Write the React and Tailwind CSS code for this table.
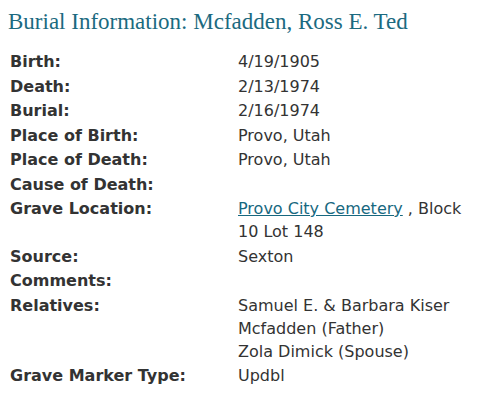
import React from 'react';

const rows = [
  { label: 'Birth:', value: '4/19/1905' },
  { label: 'Death:', value: '2/13/1974' },
  { label: 'Burial:', value: '2/16/1974' },
  { label: 'Place of Birth:', value: 'Provo, Utah' },
  { label: 'Place of Death:', value: 'Provo, Utah' },
  { label: 'Cause of Death:', value: '' },
  {
    label: 'Grave Location:',
    value: (
      <>
        <a href="#" className="text-[#17687f] underline">Provo City Cemetery</a> , Block 10 Lot 148
      </>
    ),
  },
  { label: 'Source:', value: 'Sexton' },
  { label: 'Comments:', value: '' },
  {
    label: 'Relatives:',
    value: (
      <>
        Samuel E. &amp; Barbara Kiser Mcfadden (Father)
        <br />
        Zola Dimick (Spouse)
      </>
    ),
  },
  { label: 'Grave Marker Type:', value: 'Updbl' },
];

export default function App() {
  return (
    <div className="w-[486px] h-[415px] bg-white overflow-hidden">
      <h1 className="pl-[8px] pt-[7px] text-[23px] leading-[29px] text-[#1b6a80] font-['Liberation_Serif',serif]">
        Burial Information: Mcfadden, Ross E. Ted
      </h1>
      <div className="grid grid-cols-[228px_240px] gap-y-[1.5px] pl-[10px] pt-[14px] text-[16px] leading-[23px] text-[#333] font-['DejaVu_Sans',sans-serif]">
        {rows.map((r) => (
          <React.Fragment key={r.label}>
            <div className="font-bold">{r.label}</div>
            <div>{r.value}</div>
          </React.Fragment>
        ))}
      </div>
    </div>
  );
}
